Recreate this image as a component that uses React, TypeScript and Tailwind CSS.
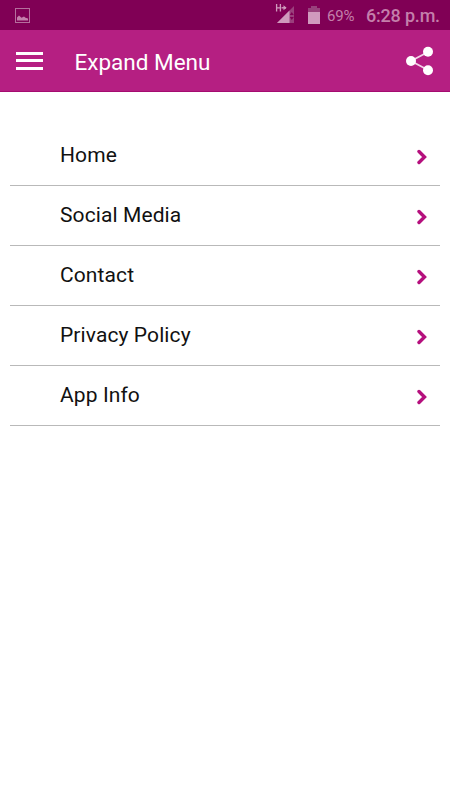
const menuItems = ["Home", "Social Media", "Contact", "Privacy Policy", "App Info"];

function StatusBar() {
  return (
    <div className="flex h-[30px] items-center bg-[#800055] pr-[10px] pl-[15px] text-[#c47fab]">
      <svg className="mt-px h-[15px] w-[15px]" viewBox="0 0 15 15" fill="none">
        <rect x="0.5" y="0.5" width="14" height="14" stroke="#b56f9d" />
        <path d="M2 12.500V9.500L4 7.500L6.500 9.800L9 8.500L10.500 9.800L13 10.500V12.500Z" fill="currentColor" />
      </svg>

      {/* Signal, with the network type in its corner */}
      <svg className="ml-auto h-[22px] w-5" viewBox="0 0 20 22">
        <path d="M2 19L19 2V19Z" fill="#9a3f7c" />
        <path d="M2 19L14.500 6.500V19Z" fill="#cf9abd" />
        <path d="M16.800 8L18.800 11H14.800ZM14.800 13H18.800L16.800 16Z" fill="#800055" />
        <path d="M1 0H9V7L6.500 9H1Z" fill="#800055" />
        <path d="M1.600 0V7.600M5.400 0V7.600M1.600 3.800H5.400" stroke="#cf9abd" strokeWidth="1.300" />
        <path d="M6.500 3.800H11" stroke="#cf9abd" strokeWidth="1.400" />
        <path d="M8.500 1.300L11.600 3.800L8.500 6.300Z" fill="#cf9abd" />
      </svg>

      {/* Battery */}
      <svg className="ml-[13px] h-[18px] w-3" viewBox="0 0 12 18">
        <path d="M3 0H9V2H12V6H0V2H3Z" fill="#98417c" />
        <path d="M0 6H12V18H0Z" fill="#d09abe" />
      </svg>
      <span className="mt-0.5 ml-[7px] w-[39px] text-[15px] leading-none tracking-[-0.2px]">69%</span>
      <span className="mt-0.5 w-[74px] text-[18px] leading-none font-medium tracking-[-0.2px] whitespace-nowrap">6:28 p.m.</span>
    </div>
  );
}

function Header() {
  return (
    <header className="flex h-[62px] items-center border-b border-[#a50b70] bg-[#b51f82] pr-[16px] pl-[16px] text-white">
      <button aria-label="Menu" className="flex w-[27px] flex-col gap-[4.500px]">
        <span className="h-[3px] w-full bg-white" />
        <span className="h-[3px] w-full bg-white" />
        <span className="h-[3px] w-full bg-white" />
      </button>
      <h1 className="mt-[3px] ml-[31.500px] text-[22.500px] leading-none">Expand Menu</h1>
      <button aria-label="Share" className="ml-auto">
        <svg className="h-[30px] w-7" viewBox="0 0 28 30">
          <path d="M22 6L5 15L22 24" fill="none" stroke="#f3d4e8" strokeWidth="1.800" />
          <circle cx="22" cy="5.800" r="5" fill="white" />
          <circle cx="5" cy="15" r="5" fill="white" />
          <circle cx="22" cy="24.200" r="5" fill="white" />
        </svg>
      </button>
    </header>
  );
}

export default function App() {
  return (
    <div className="min-h-screen w-full bg-white font-['Roboto',sans-serif]">
      <StatusBar />
      <Header />
      <ul className="px-[10px] pt-[34px]">
        {menuItems.map((item) => (
          <li
            key={item}
            className="flex h-[60px] items-center justify-between border-b border-[#b9b9b9] pr-[12px] pl-[50px] text-[21px] tracking-[0.1px] text-[#111]"
          >
            <span>{item}</span>
            <svg className="mt-[3px] h-4 w-[11px]" viewBox="0 0 11 16" fill="none">
              <path d="M2 2.500L7.500 8L2 13.500" stroke="#b5107d" strokeWidth="3.400" strokeLinecap="round" />
            </svg>
          </li>
        ))}
      </ul>
    </div>
  );
}
